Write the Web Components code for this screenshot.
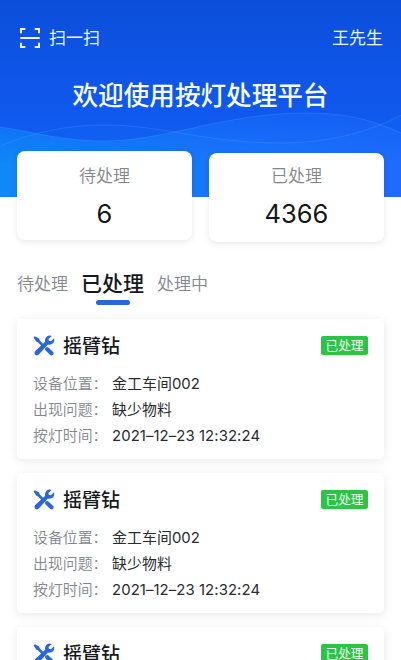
<!DOCTYPE html>
<html lang="zh-CN">
<head>
<meta charset="utf-8">
<title>按灯处理平台</title>
<style>
html,body{margin:0;height:100%;overflow:hidden;background:#fff}
body{font-family:Inter,"Noto Sans CJK SC",sans-serif}
</style>
</head>
<body>
<lamp-app></lamp-app>
<script>
const define=(name,html)=>{
  const t=document.createElement('template');t.innerHTML=html;
  customElements.define(name,class extends HTMLElement{
    constructor(){super();this.attachShadow({mode:'open'}).append(t.content.cloneNode(true));}
  });
};
define('scan-icon',`<style>:host{display:block;width:20px;height:20px}svg{display:block}</style>
<svg width="20" height="20" viewBox="0 0 20 20" fill="none" stroke="#edf6ff" stroke-width="2"><path d="M1 5.3V1H5.3M14.7 1H19V5.3M19 14.7V19H14.7M5.3 19H1V14.7M.3 10H19.7"/></svg>`);
define('tools-icon',`<style>:host{display:block;width:22px;height:22px}svg{display:block}</style>
<svg width="22" height="22" viewBox="0 0 22 22" fill="#2966dc"><path d="M1.8 1.2 6 3.6 6.9 5.6 10.7 9.4 8.9 11.2 5.1 7.4 3.2 6.6.6 2.4ZM12.3 12.4 14.9 11.9 20.2 16.9Q21.2 18.2 20.1 19.7 18.8 21.1 17.3 20.1L12.1 15Z"/>
<path d="M18.7 1Q15.9-.1 13.5 1.8 11.4 3.9 12.2 6.8L2.2 15.9Q.8 17.6 2.1 19.5 4 21.2 5.8 19.6L15 9.6Q18 10.3 20.1 8.3 21.9 6.1 21 3.3L18 6.2 15.9 5.8 15.5 4Z"/></svg>`);
define('app-banner',`<style>
:host{display:block;position:relative;height:197px;background:linear-gradient(180deg,#0b4eda 0%,#1059ee 58%,#1463f9 100%);color:#edf6ff;overflow:hidden}
.waves{position:absolute;left:0;top:0}
.bar{position:relative;display:flex;justify-content:space-between;align-items:center;padding:25px 18px 0 20px;height:25px;font-size:17px;line-height:25px}
.bar ::slotted(span){padding-top:2px}
.scan{display:flex;align-items:center;gap:9px;height:23px}
h1{position:relative;margin:27px 0 0;text-align:center;font-weight:500;font-size:25.6px;line-height:38px;color:#f8fcff}
</style>
<svg class="waves" width="401" height="197" viewBox="0 0 401 197">
<defs><linearGradient id="a" x1="0" y1="0" x2="1" y2="0"><stop offset="0" stop-color="#0e8af8"/><stop offset=".45" stop-color="#1678fb"/><stop offset="1" stop-color="#2068fc"/></linearGradient>
<linearGradient id="f" x1="0" y1="113" x2="0" y2="165" gradientUnits="userSpaceOnUse"><stop offset="0" stop-color="#fff" stop-opacity=".35"/><stop offset="1" stop-color="#fff"/></linearGradient>
<mask id="m"><path fill="url(#f)" d="M0 100H401V197H0Z"/></mask></defs>
<path mask="url(#m)" fill="url(#a)" d="M0 127C35 132 62 141 105 141C165 141 225 113 305 113C350 113 374 121 401 133V197H0Z"/>
<path fill="#1686ff" opacity=".12" d="M0 146C30 134 62 125 105 125C163 125 205 143 280 143C328 143 370 132 401 115V197H0Z"/>
<g fill="none" stroke="#69acff" stroke-opacity=".28" stroke-width=".8"><path d="M0 127C35 132 62 141 105 141C165 141 225 113 305 113C350 113 374 121 401 133"/><path d="M0 146C30 134 62 125 105 125C163 125 205 143 280 143C328 143 370 132 401 115"/></g></svg>
<div class="bar"><div class="scan"><scan-icon></scan-icon><slot name="action"></slot></div><slot name="user"></slot></div>
<h1><slot></slot></h1>`);
define('stat-card',`<style>
:host{display:block;box-sizing:border-box;width:175px;height:89px;padding-top:13px;border-radius:8px;background:#fff;box-shadow:0 2px 7px rgba(0,0,0,.09);text-align:center}
.l{font-size:17px;line-height:25px;color:#82858b;font-weight:350}
.n{font-size:25.5px;line-height:30px;margin-top:10px;color:#15161a;font-weight:400}
</style><div class="l"><slot></slot></div><div class="n"><slot name="value"></slot></div>`);
define('tab-item',`<style>
:host{display:flex;flex-direction:column;align-items:center;font-size:17px;line-height:34px;color:#83878e;font-weight:350}
i{display:none;width:34px;height:5px;border-radius:3px;background:#2966dc}
:host([active]){font-size:21px;line-height:33px;color:#17191d;font-weight:500}
:host([active]) i{display:block}
</style><slot></slot><i></i>`);
define('status-tag',`<style>
:host{display:block;width:47px;height:19px;border-radius:2px;background:#2bc546;color:#effff0;font-size:12.7px;line-height:19px;text-align:center}
</style><slot></slot>`);
define('info-row',`<style>
:host{display:flex;height:26px;line-height:26px;font-size:14.9px;color:#292b2f}
.k{width:79px;color:#83878e;font-weight:350}.v{white-space:nowrap;letter-spacing:.08px}
</style><span class="k"><slot name="label"></slot></span><span class="v"><slot></slot></span>`);
define('task-card',`<style>
:host{display:block;box-sizing:border-box;height:140px;padding:13px 16px 0;border-radius:5px;background:#fff;box-shadow:0 2px 11px rgba(0,0,0,.09)}
header{display:flex;align-items:center;height:27px;margin-bottom:11.5px}
b{flex:1;margin-left:8px;padding-top:2px;font-size:19px;line-height:27px;font-weight:500;color:#17191d}
</style><header><tools-icon></tools-icon><b><slot name="title"></slot></b><slot name="status"></slot></header><slot></slot>`);
const card=rows=>`<task-card><span slot="title">摇臂钻</span><status-tag slot="status">已处理</status-tag>${rows}</task-card>`;
const rows=`<info-row><span slot="label">设备位置：</span>金工车间002</info-row>
<info-row><span slot="label">出现问题：</span>缺少物料</info-row>
<info-row><span slot="label">按灯时间：</span>2021–12–23 12:32:24</info-row>`;
define('lamp-app',`<style>
:host{display:block;width:401px;height:660px;overflow:hidden;background:#fff}
.stats{position:relative;display:flex;justify-content:space-between;margin-top:-46px;padding:0 17px}
.stats stat-card+stat-card{margin-top:2px;padding-top:11px}
nav{display:flex;align-items:flex-start;gap:13px;padding:0 17px;margin-top:25px;height:52px}
.list{display:grid;gap:14px;padding:0 17px}
</style>
<app-banner><span slot="action">扫一扫</span><span slot="user">王先生</span>欢迎使用按灯处理平台</app-banner>
<div class="stats"><stat-card>待处理<span slot="value">6</span></stat-card><stat-card>已处理<span slot="value">4366</span></stat-card></div>
<nav><tab-item>待处理</tab-item><tab-item active>已处理</tab-item><tab-item>处理中</tab-item></nav>
<div class="list">${card(rows)}${card(rows)}${card('')}</div>`);
</script>
</body>
</html>
